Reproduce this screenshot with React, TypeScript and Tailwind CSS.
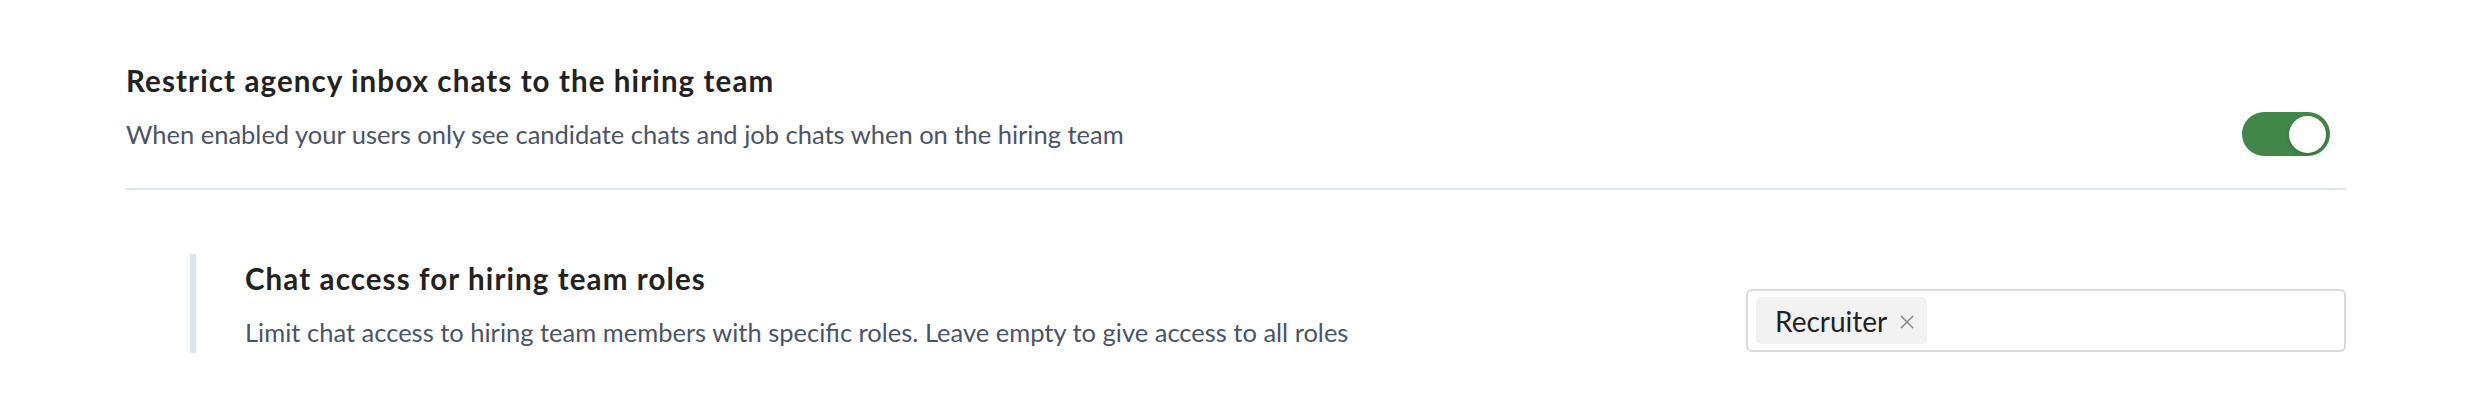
function Toggle({ on }: { on: boolean }) {
  return (
    <button
      type="button"
      role="switch"
      aria-checked={on}
      className={
        on
          ? "flex h-[44px] w-[88px] items-center justify-end rounded-full bg-[#43864a] px-[4px]"
          : "flex h-[44px] w-[88px] items-center justify-start rounded-full bg-[#d1d5db] px-[4px]"
      }
    >
      <span className="block h-[37px] w-[37px] rounded-full bg-white shadow-[0_2px_4px_rgba(0,0,0,0.18)]" />
    </button>
  );
}

function RoleChip({ label }: { label: string }) {
  return (
    <span className="flex h-[47px] items-center gap-[13px] rounded-[5px] bg-[#f2f2f2] pl-[19px] pr-[13px] text-[28px] leading-none text-[#222]">
      {label}
      <svg width="14" height="14" viewBox="0 0 14 14" className="mt-[2px]">
        <path d="M1 1L13 13M13 1L1 13" stroke="#8a8a8a" strokeWidth="1.6" />
      </svg>
    </span>
  );
}

export default function App() {
  return (
    <div
      className="h-[408px] w-full bg-white"
      style={{ fontFamily: "Lato, 'Noto Sans', sans-serif" }}
    >
      <div className="ml-[126px] w-[2220px] pt-[63px]">
        <div className="flex items-end justify-between pr-[16px]">
          <div>
            <h2 className="text-[29.5px] font-bold leading-[36px] tracking-[1.1px] text-[#222]">
              Restrict agency inbox chats to the hiring team
            </h2>
            <p className="mt-[17px] text-[25.5px] leading-[36px] text-[#4a5468]">
              When enabled your users only see candidate chats and job chats when on the hiring team
            </p>
          </div>
          <div className="-mb-[4px]">
            <Toggle on />
          </div>
        </div>

        <div className="mt-[36px] h-[2px] bg-[#e1e7ee]" />

        <div className="ml-[64px] mt-[64px] flex items-start justify-between">
          <div className="border-l-[6px] border-[#dde5ed] pb-[3px] pl-[49px] pt-[7px]">
            <h3 className="text-[29.5px] font-bold leading-[36px] tracking-[1.1px] text-[#222]">
              Chat access for hiring team roles
            </h3>
            <p className="mt-[17px] text-[25.5px] leading-[36px] text-[#4a5468]">
              Limit chat access to hiring team members with specific roles. Leave empty to give access to all roles
            </p>
          </div>
          <div className="mt-[35px] flex h-[63px] w-[600px] items-center rounded-[6px] border-2 border-[#d9d9d9] px-[8px]">
            <RoleChip label="Recruiter" />
          </div>
        </div>
      </div>
    </div>
  );
}
